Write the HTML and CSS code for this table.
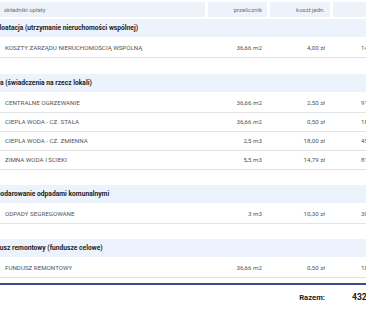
FILE: index.html
```html
<!DOCTYPE html>
<html lang="pl">
<head>
<meta charset="utf-8">
<title>Składniki opłaty</title>
<link rel="stylesheet" href="styles.css">
</head>
<body>
<div class="viewport">
  <div class="sheet">
    <div class="row head">
      <div class="c name">składniki opłaty</div>
      <div class="c num">przelicznik</div>
      <div class="c num">koszt jedn.</div>
      <div class="c num">wartość</div>
    </div>

    <section class="group">
      <div class="gtitle">Eksploatacja (utrzymanie nieruchomości wspólnej)</div>
      <div class="row item"><div class="name">KOSZTY ZARZĄDU NIERUCHOMOŚCIĄ WSPÓLNĄ</div><div class="num">36,66 m2</div><div class="num">4,00 zł</div><div class="val">146,64 zł</div></div>
    </section>

    <section class="group g2">
      <div class="gtitle">Media (świadczenia na rzecz lokali)</div>
      <div class="row item"><div class="name">CENTRALNE OGRZEWANIE</div><div class="num">36,66 m2</div><div class="num">2,50 zł</div><div class="val">91,65 zł</div></div>
      <div class="row item"><div class="name">CIEPŁA WODA - CZ. STAŁA</div><div class="num">36,66 m2</div><div class="num">0,50 zł</div><div class="val">18,33 zł</div></div>
      <div class="row item"><div class="name">CIEPŁA WODA - CZ. ZMIENNA</div><div class="num">2,5 m3</div><div class="num">18,00 zł</div><div class="val">45,00 zł</div></div>
      <div class="row item"><div class="name">ZIMNA WODA I ŚCIEKI</div><div class="num">5,5 m3</div><div class="num">14,79 zł</div><div class="val">81,35 zł</div></div>
    </section>

    <section class="group">
      <div class="gtitle">Gospodarowanie odpadami komunalnymi</div>
      <div class="row item"><div class="name">ODPADY SEGREGOWANE</div><div class="num">3 m3</div><div class="num">10,30 zł</div><div class="val">30,90 zł</div></div>
    </section>

    <section class="group">
      <div class="gtitle">Fundusz remontowy (fundusze celowe)</div>
      <div class="row item"><div class="name">FUNDUSZ REMONTOWY</div><div class="num">36,66 m2</div><div class="num">0,50 zł</div><div class="val">18,33 zł</div></div>
    </section>

    <div class="row total">
      <div></div>
      <div></div>
      <div class="num">Razem:</div>
      <div class="sum">432,20 zł</div>
    </div>
  </div>
</div>
</body>
</html>
```

FILE: styles.css
```css
html, body {
  margin: 0;
  padding: 0;
  background: #ffffff;
}

body {
  font-family: Roboto, "Liberation Sans", Arial, sans-serif;
}

.viewport {
  width: 366px;
  height: 311px;
  overflow: hidden;
}

.sheet {
  width: 415px;
  margin-left: -20px;
  padding-top: 2px;
}

.row {
  display: grid;
  grid-template-columns: 225px 59px 60px 62px;
  column-gap: 3px;
}

.name {
  padding-left: 25px;
  white-space: nowrap;
}

.num {
  text-align: right;
  padding-right: 5px;
  white-space: nowrap;
}

.val {
  padding-left: 28px;
  white-space: nowrap;
}

.head {
  height: 15px;
  margin-bottom: 2px;
}

.head .c {
  background: #edf2fb;
  font-size: 6px;
  line-height: 15px;
  color: #707070;
}

.head .name {
  padding-left: 24px;
}

.gtitle {
  height: 18px;
  line-height: 18px;
  background: #edf3fc;
  font-size: 6.7px;
  font-weight: 700;
  color: #222222;
  padding-left: 5px;
  margin-bottom: 2px;
  white-space: nowrap;
}

.item {
  height: 18px;
  line-height: 18px;
  border-bottom: 1px solid #e3e3e3;
  font-size: 6.2px;
  color: #555555;
}

.group + .group {
  margin-top: 15px;
}

.group.g2 {
  margin-top: 16px;
}

.total {
  margin-top: 5px;
  border-top: 2px solid #404c8c;
  height: 25px;
  line-height: 25px;
  font-size: 7.7px;
  font-weight: 700;
  color: #222222;
}

.sum {
  padding-left: 19px;
  font-size: 8.6px;
  white-space: nowrap;
}
```
